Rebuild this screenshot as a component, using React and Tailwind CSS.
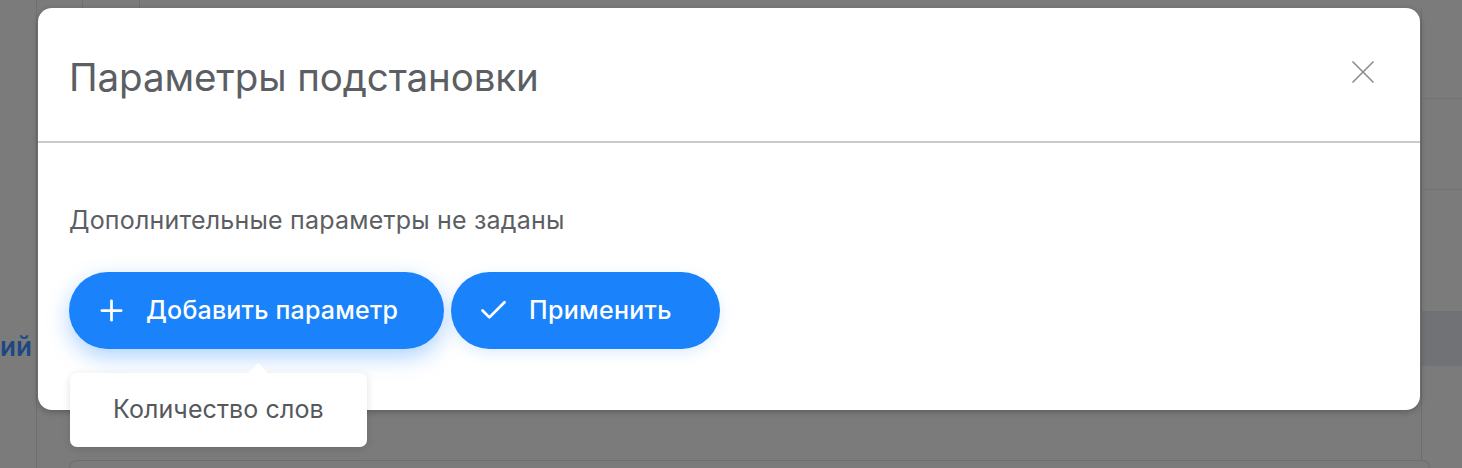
import { Plus, Check, X } from "lucide-react";

// Dimmed page that sits behind the modal overlay
function BackdropPage() {
  return (
    <div className="absolute inset-0 flex">
      <div className="w-[37px] shrink-0 border-r border-[#6f6f6f] pt-[333px]">
        <span className="block text-[26px] font-semibold leading-[28px] text-[#1d4884]">ий</span>
      </div>
      <div className="flex flex-1 flex-col">
        <div className="flex h-[8px] gap-[56px] pl-[45px]">
          <div className="h-full w-px bg-[#707070]" />
          <div className="h-full w-px bg-[#707070]" />
        </div>
        <div className="flex flex-1 justify-end">
          <div className="flex w-[41px] flex-col border-l border-[#6e6e6e]">
            <div className="h-[91px] border-b border-[#727272]" />
            <div className="h-[91px] border-b border-[#737373]" />
            <div className="h-[121px]" />
            <div className="h-[55px] bg-[#717275]" />
          </div>
        </div>
        <div className="mx-[32px] h-[8px] rounded-t-[10px] border-x border-t border-[#6e6e6e]" />
      </div>
    </div>
  );
}

export default function App() {
  return (
    <div
      className="relative h-[468px] w-[1462px] overflow-hidden bg-[#7b7b7b]"
      style={{ fontFamily: "Inter, 'Noto Sans', sans-serif" }}
    >
      <BackdropPage />

      {/* Modal */}
      <div className="relative ml-[38px] mt-[8px] h-[402px] w-[1382px] rounded-[14px] bg-white shadow-[0_2px_6px_rgba(0,0,0,0.25)]">
        {/* Header */}
        <div className="flex h-[135px] items-center justify-between border-b-2 border-[#c9cacd] pl-[31px] pr-[37px]">
          <h2 className="mt-[5px] text-[38.5px] font-normal leading-none tracking-[-0.1px] text-[#5b5e63]">
            Параметры подстановки
          </h2>
          <X className="-mt-[6px] h-[40px] w-[40px] text-[#8c8c8c]" strokeWidth={1} />
        </div>

        {/* Body */}
        <div className="px-[31px] pt-[62px]">
          <p className="text-[25px] leading-[30px] tracking-[0.2px] text-[#5b5e63]">
            Дополнительные параметры не заданы
          </p>

          <div className="mt-[37px] flex gap-[7px]">
            <button className="flex h-[77px] w-[375px] items-center gap-[18px] rounded-full bg-[#1a82fb] pl-[26px] text-[25px] font-medium tracking-[0.2px] text-white shadow-[0_8px_22px_rgba(26,130,251,0.35)]">
              <Plus className="h-[33px] w-[33px]" strokeWidth={2} />
              <span>Добавить параметр</span>
            </button>
            <button className="flex h-[77px] w-[269px] items-center gap-[19px] rounded-full bg-[#1a82fb] pl-[26px] text-[25px] font-medium tracking-[0.3px] text-white shadow-[0_4px_14px_rgba(26,130,251,0.15)]">
              <Check className="h-[33px] w-[33px]" strokeWidth={2} />
              <span>Применить</span>
            </button>
          </div>
        </div>

        {/* Dropdown menu under "Добавить параметр" */}
        <div className="absolute left-[32px] top-[365px] w-[297px] rounded-[7px] bg-white shadow-[0_2px_8px_rgba(0,0,0,0.12)]">
          <div className="absolute -top-[10px] left-[178px] h-0 w-0 border-x-[10px] border-b-[10px] border-x-transparent border-b-white" />
          <div className="flex h-[74px] items-center pl-[43px] text-[25px] tracking-[0.1px] text-[#55585d]">
            Количество слов
          </div>
        </div>
      </div>
    </div>
  );
}
